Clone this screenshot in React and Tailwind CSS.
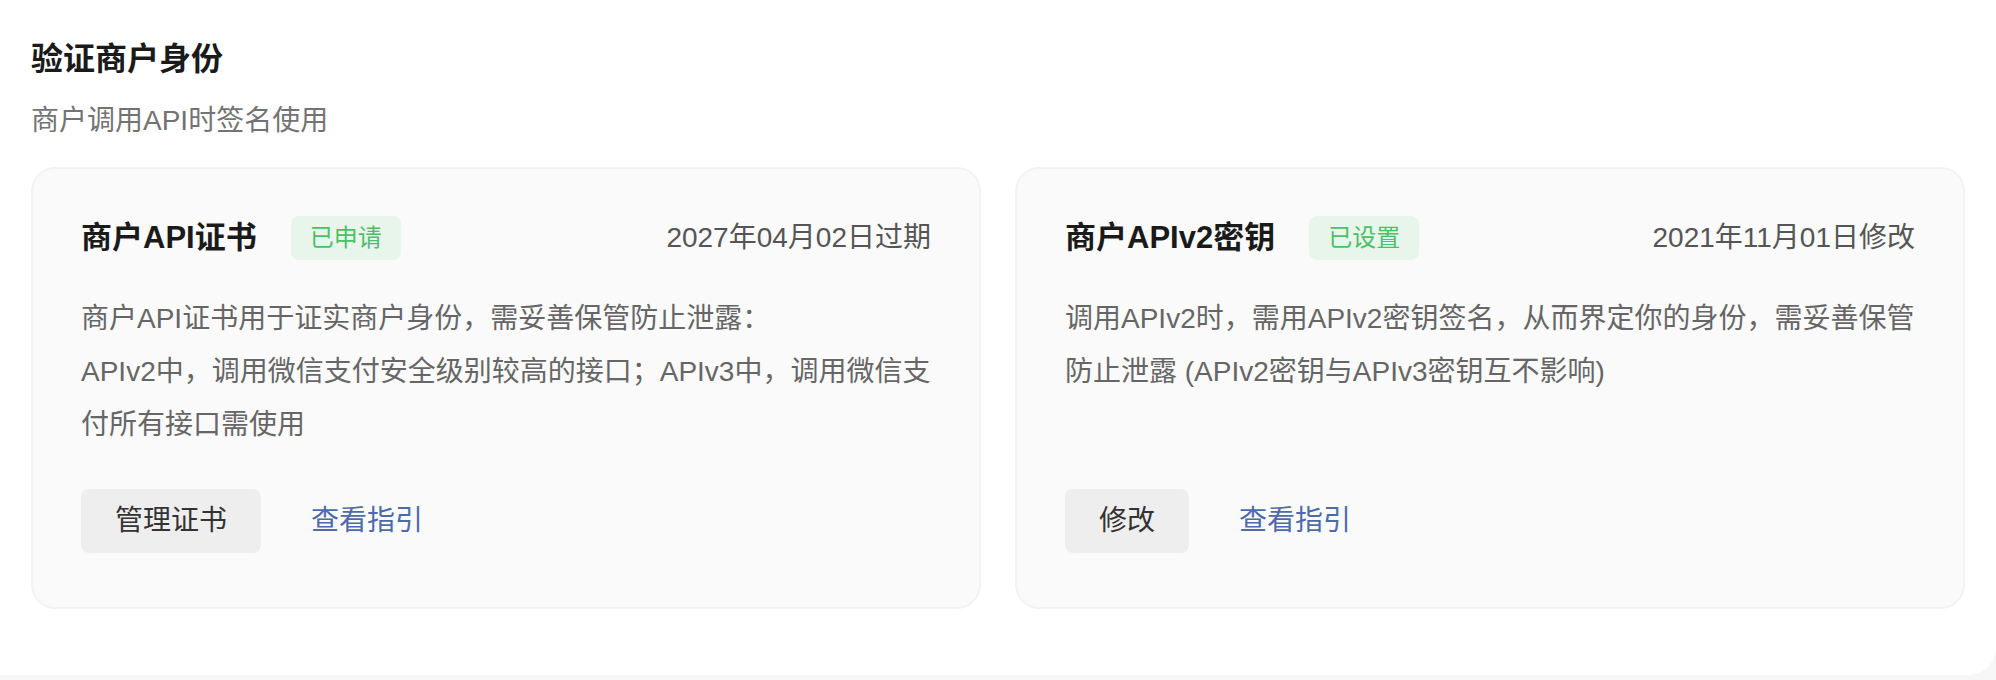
import React from "react";

const FONT = { fontFamily: '"Liberation Sans", "Noto Sans CJK SC", sans-serif' };

function Card({ title, badge, date, lines, action }) {
  return (
    <div className="flex flex-col rounded-[24px] border-2 border-[#f3f3f3] bg-[#fafafa] px-[48px] pt-[47px] pb-[54px]">
      <div className="flex h-[44px] items-center">
        <div className="text-[31px] font-semibold leading-[44px] text-[#1a1a1a]">{title}</div>
        <div className="ml-[34px] flex h-[44px] items-center rounded-[8px] bg-[#e8f5eb] px-[19px] text-[24px] text-[#4cbf67]">
          {badge}
        </div>
        <div className="ml-auto text-[28px] text-[#555555]">{date}</div>
      </div>
      <div className="mt-[32px] flex-1 text-[28px] leading-[53px] text-[#666666]">
        {lines.map((l, i) => (
          <div key={i}>{l}</div>
        ))}
      </div>
      <div className="mt-[38px] flex items-center">
        <button className="flex h-[64px] items-center rounded-[8px] bg-[#eeeeee] px-[34px] text-[28px] text-[#333333]">
          {action}
        </button>
        <a className="ml-[50px] text-[28px] text-[#4f6aa8]">查看指引</a>
      </div>
    </div>
  );
}

export default function App() {
  return (
    <div className="h-[680px] w-full bg-[#f7f7f7]" style={FONT}>
      <div className="h-[675px] rounded-br-[28px] bg-white pt-[37px]">
        <div className="px-[31px]">
          <h1 className="text-[32px] font-bold leading-[44px] text-[#1a1a1a]">验证商户身份</h1>
          <p className="mt-[20px] text-[28px] leading-[40px] text-[#737373]">商户调用API时签名使用</p>
        </div>
        <div className="mt-[26px] grid grid-cols-2 gap-[34px] px-[31px]">
          <Card
            title="商户API证书"
            badge="已申请"
            date="2027年04月02日过期"
            lines={[
              "商户API证书用于证实商户身份，需妥善保管防止泄露：",
              "APIv2中，调用微信支付安全级别较高的接口；APIv3中，调用微信支",
              "付所有接口需使用",
            ]}
            action="管理证书"
          />
          <Card
            title="商户APIv2密钥"
            badge="已设置"
            date="2021年11月01日修改"
            lines={[
              "调用APIv2时，需用APIv2密钥签名，从而界定你的身份，需妥善保管",
              "防止泄露 (APIv2密钥与APIv3密钥互不影响)",
            ]}
            action="修改"
          />
        </div>
      </div>
    </div>
  );
}
